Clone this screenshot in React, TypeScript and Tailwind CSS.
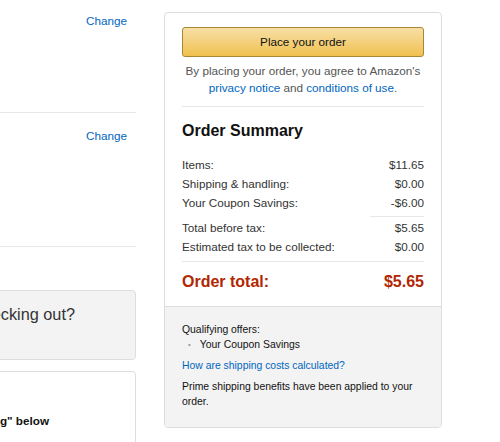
import React from 'react';

const font = { fontFamily: '"Liberation Sans", Arial, sans-serif' };

const rows1 = [
  { label: 'Items:', value: '$11.65' },
  { label: 'Shipping & handling:', value: '$0.00' },
  { label: 'Your Coupon Savings:', value: '-$6.00' },
];

const rows2 = [
  { label: 'Total before tax:', value: '$5.65' },
  { label: 'Estimated tax to be collected:', value: '$0.00' },
];

const Row = ({ label, value }: { label: string; value: string }) => (
  <div className="flex justify-between leading-[19px] text-[11.7px] text-[#333]">
    <span>{label}</span>
    <span>{value}</span>
  </div>
);

export default function App() {
  return (
    <div className="w-[500px] h-[442px] overflow-hidden bg-white" style={font}>
      <div className="flex -ml-[24px] gap-[28px]">
        {/* left column, cropped by the window edge */}
        <div className="w-[160px] shrink-0">
          <div className="h-[113px] border-b border-[#e7e7e7] pt-[12px] pr-[9px] flex justify-end">
            <a className="text-[11.7px] leading-[17px] text-[#0066c0]">Change</a>
          </div>
          <div className="h-[134px] border-b border-[#e7e7e7] pt-[14px] pr-[9px] flex justify-end">
            <a className="text-[11.7px] leading-[17px] text-[#0066c0]">Change</a>
          </div>
          <div className="mt-[43px] h-[70px] rounded-[4px] border border-[#ddd] bg-[#f3f3f3] pt-[13px] pr-[60px] flex justify-end whitespace-nowrap">
            <span className="text-[16.3px] leading-[20px] text-[#333]">Want to save time checking out?</span>
          </div>
          <div className="mt-[11px] h-[90px] rounded-[4px] border border-[#ddd] bg-white pt-[40px] pr-[86px] flex justify-end whitespace-nowrap">
            <span className="text-[11.7px] leading-[17px] font-bold text-[#111]">Select "Continue shopping" below</span>
          </div>
        </div>

        {/* order summary box */}
        <div className="w-[278px] shrink-0 mt-[12px] h-[416px] rounded-[4px] border border-[#ddd] overflow-hidden flex flex-col">
          <div className="px-[17px] pt-[14px] pb-[14px] border-b border-[#ddd]">
            <button className="w-full h-[30px] rounded-[3px] border border-[#a88734] bg-gradient-to-b from-[#f7dfa5] to-[#f0c14b] text-[11.7px] text-[#111]">
              Place your order
            </button>
            <p className="mt-[5px] text-center text-[11.7px] leading-[17px] text-[#555]">
              By placing your order, you agree to Amazon's{' '}
              <a className="text-[#0066c0]">privacy notice</a> and{' '}
              <a className="text-[#0066c0]">conditions of use</a>.
            </p>
            <div className="mt-[10px] h-px bg-[#e7e7e7]" />
            <h2 className="mt-[14px] text-[16px] leading-[20px] font-bold text-[#111]">Order Summary</h2>
            <div className="mt-[14px]">
              {rows1.map(r => <Row key={r.label} {...r} />)}
            </div>
            <div className="mt-[4px] ml-auto w-[54px] h-px bg-[#e7e7e7]" />
            <div className="mt-[1px]">
              {rows2.map(r => <Row key={r.label} {...r} />)}
            </div>
            <div className="mt-[5px] h-px bg-[#e7e7e7]" />
            <div className="mt-[10px] flex justify-between text-[16px] leading-[20px] font-bold text-[#b12704]">
              <span>Order total:</span>
              <span>$5.65</span>
            </div>
          </div>
          <div className="flex-1 bg-[#f3f3f3] px-[17px] pt-[15px] text-[10.4px] leading-[15px] text-[#111]">
            <div>Qualifying offers:</div>
            <ul className="pl-[6px]">
              <li className="flex items-center gap-[9px]">
                <span className="text-[#999] text-[8px]">•</span>
                <span>Your Coupon Savings</span>
              </li>
            </ul>
            <a className="block mt-[6px] text-[#0066c0]">How are shipping costs calculated?</a>
            <p className="mt-[6px]">Prime shipping benefits have been applied to your order.</p>
          </div>
        </div>
      </div>
    </div>
  );
}
